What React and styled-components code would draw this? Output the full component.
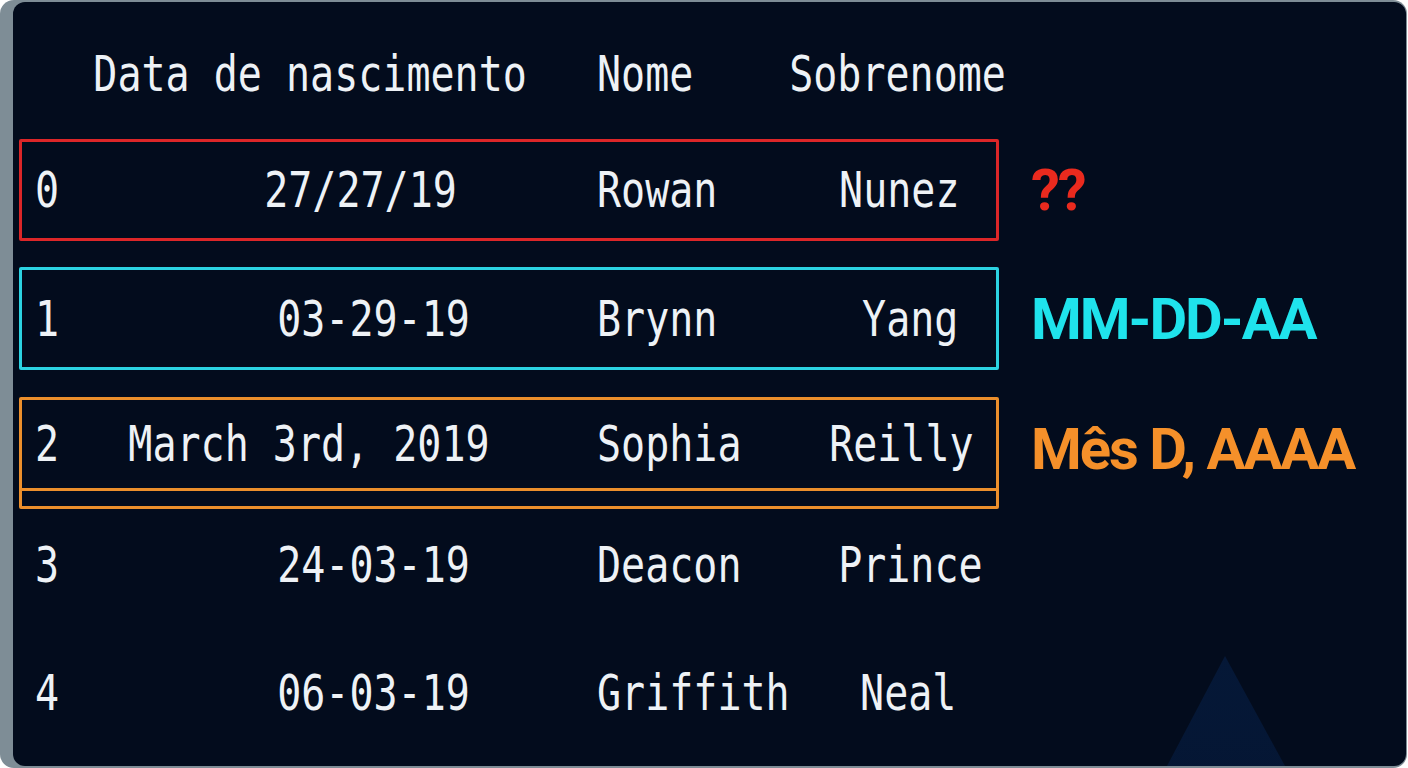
import React from 'react';
import styled, { createGlobalStyle } from 'styled-components';

const Global = createGlobalStyle`
  html, body { margin: 0; padding: 0; background: #ffffff; }
  #root { width: 1408px; height: 768px; }
`;

const Frame = styled.div`
  width: 1407px;
  height: 768px;
  box-sizing: border-box;
  padding: 2px 1px 2px 13px;
  background: #7e8d96;
  border-radius: 14px;
  display: flex;
`;

const Card = styled.main`
  position: relative;
  flex: 1;
  overflow: hidden;
  background: #030c1d;
  border-radius: 12px;
  padding: 38px 0 0 6px;
  display: flex;
  flex-direction: column;
`;

const Row = styled.div`
  display: grid;
  grid-template-columns: 980px auto;
  column-gap: 32px;
  align-items: center;
  margin-top: ${p => p.$mt}px;
  position: relative;
  z-index: 1;
`;

const Box = styled.div`
  width: 980px;
  height: ${p => p.$h}px;
  box-sizing: border-box;
  border: 3px solid ${p => p.$color || 'transparent'};
  border-radius: 2px;
  display: flex;
  flex-direction: column;
`;

const Line = styled.div`
  display: grid;
  grid-template-columns: 60px 435px 70px 193px 216px;
  align-items: center;
  padding-left: 10px;
  height: ${p => (p.$h ? `${p.$h}px` : '100%')};
  box-sizing: border-box;
  border-bottom: ${p => (p.$divider ? `3px solid ${p.$divider}` : 'none')};
  flex-shrink: 0;
`;

const Cell = styled.div`
  display: flex;
  justify-content: ${p => (p.$right ? 'flex-end' : 'flex-start')};
  padding-right: ${p => p.$pr || 0}px;
  padding-left: ${p => p.$pl || 0}px;
  min-width: 0;
`;

const Spacer = styled.div``;

const Mono = styled.span`
  display: inline-block;
  white-space: pre;
  font-family: "DejaVu Sans Mono", "Liberation Mono", monospace;
  font-size: 50px;
  line-height: 50px;
  color: #eef2f6;
  transform: scaleX(0.8);
  transform-origin: ${p => (p.$right ? 'right' : 'left')} center;
`;

const Label = styled.div`
  font-family: Roboto, "Noto Sans", sans-serif;
  font-weight: 700;
  font-size: 58px;
  line-height: 1;
  letter-spacing: -2px;
  color: ${p => p.$color};
  margin-top: ${p => p.$offset || 0}px;
  white-space: nowrap;
`;

const Deco = styled.svg`
  position: absolute;
  right: 121px;
  bottom: 0;
  z-index: 0;
`;

const header = { i: '', date: 'Data de nascimento', datePr: 0, name: 'Nome', sur: 'Sobrenome', surPr: 0 };

const rows = [
  { i: '0', date: '27/27/19', datePr: 70, name: 'Rowan', sur: 'Nunez', surPr: 46, color: '#dc2628', label: '??', labelColor: '#ea2a1e', h: 102, mt: 31 },
  { i: '1', date: '03-29-19', datePr: 57, name: 'Brynn', sur: 'Yang', surPr: 48, color: '#2cd3e2', label: 'MM-DD-AA', labelColor: '#1fe3ec', h: 103, mt: 26 },
  { i: '2', date: 'March 3rd, 2019', datePr: 37, name: 'Sophia', sur: 'Reilly', surPr: 32, color: '#ec8f2c', label: 'Mês D, AAAA', labelColor: '#f5902a', h: 112, mt: 27, lineH: 91, divider: true, labelOffset: -8 },
  { i: '3', date: '24-03-19', datePr: 57, name: 'Deacon', sur: 'Prince', surPr: 23, h: 64, mt: 24 },
  { i: '4', date: '06-03-19', datePr: 57, name: 'Griffith', sur: 'Neal', surPr: 50, h: 64, mt: 64 },
];

function TableLine({ r, h, divider }) {
  return (
    <Line $h={h} $divider={divider}>
      <Cell $pl={3}><Mono>{r.i}</Mono></Cell>
      <Cell $right $pr={r.datePr}><Mono $right>{r.date}</Mono></Cell>
      <Spacer />
      <Cell><Mono>{r.name}</Mono></Cell>
      <Cell $right $pr={r.surPr}><Mono $right>{r.sur}</Mono></Cell>
    </Line>
  );
}

export default function App() {
  return (
    <>
      <Global />
      <Frame>
        <Card>
          <Row $mt={0}>
            <Box $h={68}>
              <TableLine r={header} />
            </Box>
          </Row>
          {rows.map(r => (
            <Row key={r.i} $mt={r.mt}>
              <Box $h={r.h} $color={r.color}>
                <TableLine r={r} h={r.lineH} divider={r.divider ? r.color : null} />
              </Box>
              {r.label && (
                <Label $color={r.labelColor} $offset={r.labelOffset}>{r.label}</Label>
              )}
            </Row>
          ))}
          <Deco width="118" height="110" viewBox="0 0 118 110">
            <defs>
              <linearGradient id="tri" x1="0" y1="0" x2="0" y2="1">
                <stop offset="0" stopColor="#061d42" stopOpacity="0.7" />
                <stop offset="1" stopColor="#05193a" stopOpacity="0.8" />
              </linearGradient>
            </defs>
            <polygon points="58,0 0,110 118,110" fill="url(#tri)" />
          </Deco>
        </Card>
      </Frame>
    </>
  );
}
